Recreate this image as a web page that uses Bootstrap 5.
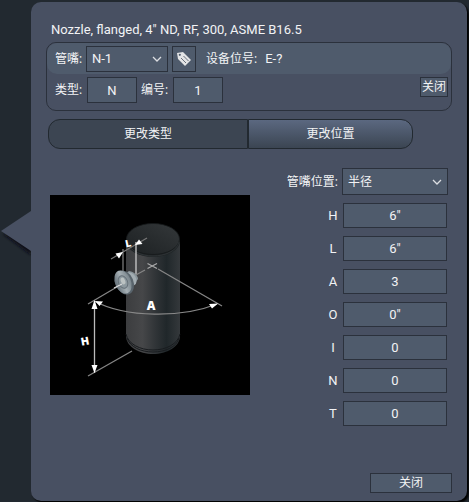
<!DOCTYPE html>
<html lang="zh-CN">
<head>
<meta charset="utf-8">
<meta name="viewport" content="width=device-width, initial-scale=1">
<title>Nozzle</title>
<link href="https://cdn.jsdelivr.net/npm/bootstrap@5.3.0/dist/css/bootstrap.min.css" rel="stylesheet">
<style>
body{background:#222930;color:#f2f3f5;font:12px/18px "Open Sans","Noto Sans CJK SC",sans-serif;}
.page{padding:2px 2px 1px 31px;}
.panel{background:#485062;border-radius:10px;padding:19px 15px 8px;box-shadow:2px 2px 2px #000;min-height:calc(100vh - 3px);}
.pointer{left:-30px;top:209px;width:30px;height:46px;}
.title{padding-left:5px;margin-bottom:3px;}
.group{border:1px solid #2b313c;border-radius:10px;height:69px;}
.band{background:#4f5b6c;border-radius:10px;height:31px;padding-left:8px;}
.second{padding:3px 3px 0 8px;}
.field,.field:focus{background-color:#4f5b6c;border:1px solid #2b313c;border-radius:0;color:#f2f3f5;font-size:12px;line-height:18px;padding:0;min-height:0;box-shadow:none;}
.field{height:26px;}
.title,.tagno,input.field,input.field:focus,select.pick,select.pick:focus,.letter{font-family:Roboto,"Open Sans",sans-serif;font-size:13px;}
select.field{padding-left:5px;background-image:url("data:image/svg+xml,%3Csvg xmlns='http://www.w3.org/2000/svg' viewBox='0 0 10 6'%3E%3Cpath d='M1 1l4 4 4-4' fill='none' stroke='%23dcdee2' stroke-width='1.3'/%3E%3C/svg%3E");background-size:10px 6px;background-position:right 5px center;}
.pick{width:82px;}
.key{width:28px;margin-right:4px;white-space:nowrap;}
.band .key{margin-right:3px;}
.short{width:50px;}
.tagbtn{width:24px;height:26px;margin:0 10px 0 4px;}
.closesm{width:28px;height:20px;}
.tabs{margin:8px 0 0 2px;}
.tabs button{height:30px;border:1px solid #222930;color:#f2f3f5;padding:0;}
.tab1{width:200px;background:#3c4552;border-radius:12px 0 0 12px;}
.tab2{width:165px;background:linear-gradient(#5b6880,#3b4552);border-radius:0 12px 12px 0;}
.main{margin-top:19px;padding:0 4px;}
.drawing{width:200px;height:200px;margin-top:27px;background:#000;}
.params{row-gap:8px;}
.wide{width:106px;height:27px;margin-left:4px;}
.value{width:104px;height:25px;margin:0 1px 0 0;}
.letter{width:20px;text-align:center;}
.closebtn{width:82px;height:20px;margin-top:47px;}
</style>
<script src="https://cdn.jsdelivr.net/npm/bootstrap@5.3.0/dist/js/bootstrap.bundle.min.js"></script>
</head>
<body>
<div class="page">
<main class="panel position-relative d-flex flex-column">
  <svg class="pointer position-absolute" viewBox="0 0 30 46" aria-hidden="true"><defs><filter id="soft" x="-20%" y="-20%" width="140%" height="140%"><feGaussianBlur stdDeviation="1.5"/></filter></defs><path d="M2 23L30 44V20z" fill="#0d1116" filter="url(#soft)"/><path d="M0 20L30 0V40z" fill="#485062"/></svg>
  <div class="title">Nozzle, flanged, 4" ND, RF, 300, ASME B16.5</div>
  <section class="group">
    <div class="band d-flex align-items-center">
      <label class="key" for="nozzle">管嘴:</label>
      <select class="form-select field pick" id="nozzle"><option>N-1</option></select>
      <button type="button" class="btn field tagbtn d-flex align-items-center justify-content-center" aria-label="标记"><svg class="flex-shrink-0" width="16" height="16" viewBox="0 0 16 16"><path d="M1 2L7 1 15 9 9 15 2 8z" fill="#e4e5e6"/><circle cx="3.800" cy="3.800" r="1.100" fill="#4f5b6c"/><path d="M5 7l5 5M7.500 5l5 5" stroke="#6a717c"/></svg></button>
      <span>设备位号:</span><span class="tagno ms-2">E-?</span>
    </div>
    <div class="second d-flex align-items-start">
      <div class="d-flex align-items-center flex-grow-1">
        <label class="key" for="kind">类型:</label>
        <input class="form-control field short text-center" id="kind" value="N">
        <label class="key ms-1" for="num">编号:</label>
        <input class="form-control field short text-center" id="num" value="1">
      </div>
      <button type="button" class="btn field closesm">关闭</button>
    </div>
  </section>
  <div class="tabs d-flex"><button type="button" class="tab1">更改类型</button><button type="button" class="tab2">更改位置</button></div>
  <div class="main d-flex justify-content-between align-items-start">
    <svg class="drawing flex-shrink-0" viewBox="0 0 200 200" role="img" aria-label="H L A">
      <defs>
        <linearGradient id="side"><stop offset="0" stop-color="#3c3d3f"/><stop offset=".3" stop-color="#464749"/><stop offset=".55" stop-color="#303437"/><stop offset=".75" stop-color="#20272a"/><stop offset="1" stop-color="#34383b"/></linearGradient>
        <linearGradient id="cap" x1="0" y1="1" x2="1" y2="0"><stop offset="0" stop-color="#1c2022"/><stop offset="1" stop-color="#34383a"/></linearGradient>
        <linearGradient id="metal"><stop offset="0" stop-color="#647078"/><stop offset=".5" stop-color="#a6b0b5"/><stop offset="1" stop-color="#77838a"/></linearGradient>
      </defs>
      <path d="M76 45V142C77 152 89 159 103 159S129 152 130 142V45z" fill="url(#side)"/>
      <path d="M76 139C78 149 90 155 103 155S128 149 130 139M77 143C80 152 91 157 103 157S127 152 129 143" fill="none" stroke="#181b1e"/>
      <ellipse cx="103" cy="46" rx="27" ry="16" fill="#202426"/>
      <ellipse cx="103" cy="44" rx="26.500" ry="15.500" fill="url(#cap)" stroke="#15191b" stroke-width=".8"/>
      <path d="M77 47C80 56 91 61 103 61S127 56 129 47" fill="none" stroke="#34393c" stroke-width=".7"/>
      <g fill="none" stroke="#858585" stroke-width="1.300">
        <path d="M61 64L97 43M73 54V80" stroke="#777"/><path d="M86 47V79" stroke="#ccc"/>
        <path d="M95 75L84 81M108 74L172 111M38 109L72 89M38 181L82 156"/>
        <path d="M97.500 68.500L107 73.500M97.500 73.500L107 68.500" stroke="#aaa"/>
        <path d="M44 106C76 123 132 123 167 109" stroke="#888"/>
        <path d="M44.500 106V178" stroke="#bbb"/>
      </g>
      <path d="M73 80L79 76C85 77 88 81 88 84L85 88 78 92z" fill="#89949a"/>
      <ellipse cx="81" cy="84" rx="5" ry="7" fill="#a3adb2" transform="rotate(-30 81 84)"/>
      <ellipse cx="74.500" cy="87.500" rx="9" ry="12.500" fill="#59646c" transform="rotate(-22 74.500 87.500)"/>
      <ellipse cx="73" cy="87" rx="8" ry="12" fill="url(#metal)" transform="rotate(-22 73 87)"/>
      <ellipse cx="73" cy="87" rx="4.500" ry="6.500" fill="#8c989e" stroke="#657078" transform="rotate(-22 73 87)"/>
      <ellipse cx="73" cy="86" rx="2.200" ry="3.500" fill="#bbc2c2" transform="rotate(-22 73 86)"/>
      <path d="M64 93L72 89" stroke="#ddd" stroke-width="1.200"/>
      <g fill="#fff">
        <path d="M73 57L65.500 58.500 69 63.500zM85 50L89 44.500 92.500 49zM44.500 105L41.500 114H47.500zM44.500 178L41.500 170H47.500zM45 106L53 106.500 49.500 111zM168 108.500L159 109 162 113.500z"/>
        <g font-family="Noto Sans" font-weight="900" text-anchor="middle"><text x="78" y="52" font-size="10" transform="rotate(-12 78 48)">L</text><text x="101" y="115" font-size="12">A</text><text x="35" y="150" font-size="11" transform="rotate(-10 35 146)">H</text></g>
      </g>
    </svg>
    <div class="params d-flex flex-column align-items-end">
      <div class="d-flex align-items-center"><label for="pos">管嘴位置:</label><select class="form-select field wide" id="pos"><option>半径</option></select></div>
      <div class="d-flex align-items-center"><label class="letter" for="vh">H</label><input class="form-control field value text-center" id="vh" value='6"'></div>
      <div class="d-flex align-items-center"><label class="letter" for="vl">L</label><input class="form-control field value text-center" id="vl" value='6"'></div>
      <div class="d-flex align-items-center"><label class="letter" for="va">A</label><input class="form-control field value text-center" id="va" value="3"></div>
      <div class="d-flex align-items-center"><label class="letter" for="vo">O</label><input class="form-control field value text-center" id="vo" value='0"'></div>
      <div class="d-flex align-items-center"><label class="letter" for="vi">I</label><input class="form-control field value text-center" id="vi" value="0"></div>
      <div class="d-flex align-items-center"><label class="letter" for="vn">N</label><input class="form-control field value text-center" id="vn" value="0"></div>
      <div class="d-flex align-items-center"><label class="letter" for="vt">T</label><input class="form-control field value text-center" id="vt" value="0"></div>
    </div>
  </div>
  <button type="button" class="btn field closebtn align-self-end">关闭</button>
</main>
</div>
</body>
</html>
